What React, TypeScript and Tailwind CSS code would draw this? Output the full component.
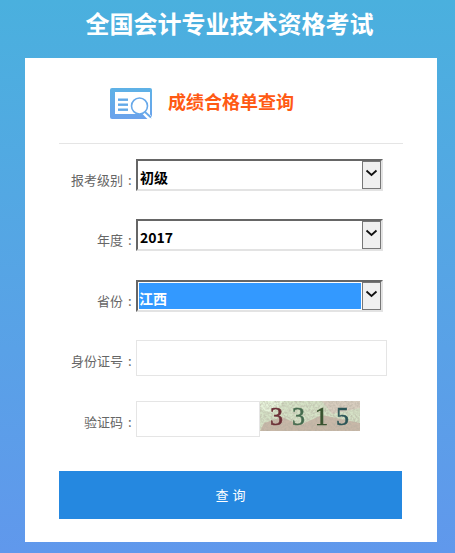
const cjk = "font-['Noto_Sans_CJK_SC','Liberation_Sans',sans-serif]";

function ReportIcon() {
  return (
    <svg width="42" height="31" viewBox="0 0 42 31" className="block">
      <defs>
        <linearGradient id="iconBlue" x1="0" y1="0" x2="0" y2="1">
          <stop offset="0" stopColor="#5eb2e6" />
          <stop offset="1" stopColor="#6ba2ec" />
        </linearGradient>
      </defs>
      <rect x="0" y="0" width="42" height="31" rx="2" fill="url(#iconBlue)" />
      <rect x="5" y="4" width="35" height="22" fill="#ffffff" />
      <rect x="8" y="10.5" width="10" height="2.4" fill="#62a9e8" />
      <rect x="8" y="15.5" width="10" height="2.4" fill="#62a9e8" />
      <rect x="8" y="20.5" width="10" height="2.4" fill="#62a9e8" />
      <path d="M33 23 L41 31" stroke="#ffffff" strokeWidth="5" />
      <circle cx="29.5" cy="18" r="8" fill="#ffffff" stroke="#68a9ea" strokeWidth="1.6" />
      <path d="M35 24 L41 29.5" stroke="#68a9ea" strokeWidth="1.8" />
    </svg>
  );
}

function Captcha() {
  return (
    <svg width="100" height="30" viewBox="0 0 100 30" className="block">
      <defs>
        <filter id="speckle" x="0" y="0" width="100%" height="100%">
          <feTurbulence type="fractalNoise" baseFrequency="0.45" numOctaves="2" seed="7" />
          <feColorMatrix
            type="matrix"
            values="0 0 0 0 0.45  0 0 0 0 0.42  0 0 0 0 0.35  1.4 0 0 0 -0.5"
          />
        </filter>
        <filter id="soft">
          <feGaussianBlur stdDeviation="0.4" />
        </filter>
      </defs>
      <rect width="100" height="30" fill="#d5e2c6" />
      <path d="M0 30 L4 22 L22 16 L40 24 L62 14 L100 22 L100 30 Z" fill="#c8b8a8" />
      <path d="M62 0 L100 0 L100 7 L72 13 Z" fill="#d8cdbf" />
      <path d="M0 0 L24 0 L12 12 L0 8 Z" fill="#e6f3da" />
      <rect width="100" height="30" filter="url(#speckle)" />
      <g fontFamily="'Liberation Serif', serif" fontSize="26" filter="url(#soft)">
        <text x="10" y="24" fill="#6b2f36" stroke="#6b2f36" strokeWidth="0.6">3</text>
        <text x="32" y="24" fill="#456b4e" stroke="#456b4e" strokeWidth="0.5">3</text>
        <text x="55" y="24" fill="#39522f" stroke="#39522f" strokeWidth="0.6">1</text>
        <text x="76" y="24" fill="#2b5557" stroke="#2b5557" strokeWidth="0.5">5</text>
      </g>
    </svg>
  );
}

function FakeSelect({ value, selected }: { value: string; selected?: boolean }) {
  return (
    <div className="w-[247px] h-[32px] flex border-2 border-t-[#666666] border-l-[#666666] border-r-[#e3e3e3] border-b-[#e3e3e3] bg-white">
      <div className="flex-1 p-[1px]">
        <div
          className={
            selected
              ? "h-full flex items-center bg-[#3399ff] text-white text-[14px] font-bold pt-[5px]"
              : "h-full flex items-center pl-[1px] text-black text-[14px] font-bold pt-[5px]"
          }
        >
          {value}
        </div>
      </div>
      <div className="w-[19px] h-[28px] border border-[#777777] bg-[#f0f0f0] flex justify-center pt-[7px]">
        <svg width="13" height="8" viewBox="0 0 13 8">
          <path d="M1.5 1.5 L6.5 6 L11.5 1.5" fill="none" stroke="#111111" strokeWidth="1.8" />
        </svg>
      </div>
    </div>
  );
}

function Label({ text, tall }: { text: string; tall?: boolean }) {
  return (
    <div
      className={
        tall
          ? "w-[77px] shrink-0 flex justify-end gap-[5px] pr-[5px] pb-[6px] text-[13px] leading-[18px] text-[#666666] whitespace-nowrap"
          : "w-[77px] shrink-0 flex justify-end gap-[5px] pr-[5px] pb-[2px] text-[13px] leading-[18px] text-[#666666] whitespace-nowrap"
      }
    >
      <span>{text}</span>
      <span className="w-[3px]">:</span>
    </div>
  );
}

export default function App() {
  return (
    <div className={`${cjk} w-[455px] h-[553px] overflow-hidden bg-gradient-to-b from-[#4ab0de] to-[#6098ec]`}>
      <h1 className="h-[58px] pb-[12px] pl-[4px] flex items-center justify-center text-[24px] font-bold text-white">
        全国会计专业技术资格考试
      </h1>
      <div className="ml-[25px] w-[412px] h-[484px] bg-white px-[34px]">
        <div className="h-[86px] border-b border-[#e5e5e5] flex items-center pl-[51px] pt-[6px]">
          <ReportIcon />
          <div className="ml-[16px] pb-[4px] text-[18px] font-bold text-[#ff5a14]">成绩合格单查询</div>
        </div>

        <div className="mt-[15px] flex items-end">
          <Label text="报考级别" />
          <FakeSelect value="初级" />
        </div>
        <div className="mt-[28px] flex items-end">
          <Label text="年度" />
          <FakeSelect value="2017" />
        </div>
        <div className="mt-[29px] flex items-end">
          <Label text="省份" />
          <FakeSelect value="江西" selected />
        </div>
        <div className="mt-[28px] flex items-end">
          <Label text="身份证号" tall />
          <div className="w-[251px] h-[36px] border border-[#e5e5e5] bg-white" />
        </div>
        <div className="mt-[25px] flex items-start">
          <div className="h-[36px] flex items-end">
            <Label text="验证码" tall />
          </div>
          <div className="w-[124px] h-[36px] border border-[#e5e5e5] bg-white" />
          <Captcha />
        </div>
        <button className="mt-[34px] pl-[4px] w-[343px] h-[48px] block bg-[#2588e0] text-white text-[13px] tracking-[4px]">
          查询
        </button>
      </div>
    </div>
  );
}
